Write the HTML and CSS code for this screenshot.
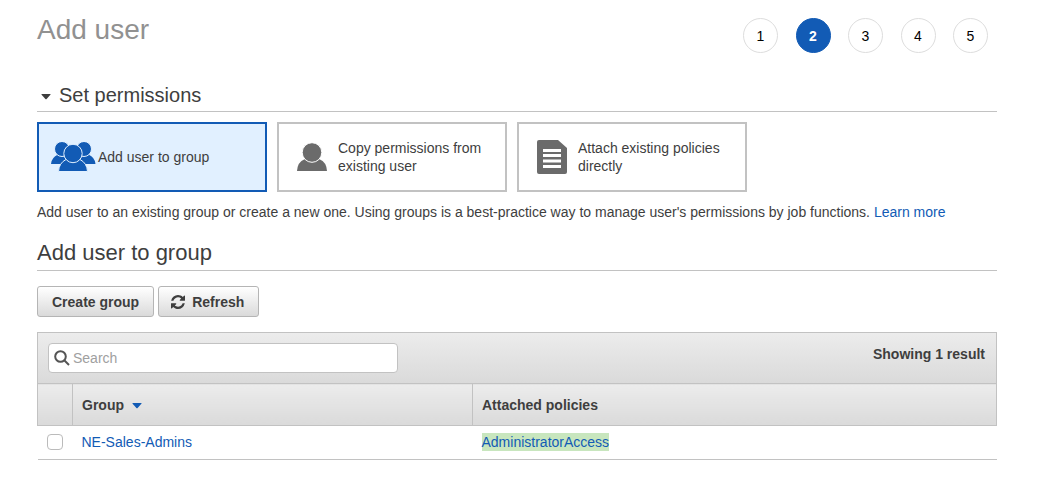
FILE: index.html
```html
<!DOCTYPE html>
<html lang="en">
<head>
<meta charset="utf-8">
<meta name="viewport" content="width=device-width, initial-scale=1">
<title>Add user</title>
<link rel="stylesheet" href="styles.css">
</head>
<body>
<main class="page">
  <header class="page-header">
    <h1 class="page-title">Add user</h1>
    <ol class="steps">
      <li class="step">1</li>
      <li class="step step-current" aria-current="step">2</li>
      <li class="step">3</li>
      <li class="step">4</li>
      <li class="step">5</li>
    </ol>
  </header>

  <h2 class="section-title">
    <button class="section-toggle" type="button" aria-expanded="true">
      <svg class="caret" viewBox="0 0 10 6" aria-hidden="true"><path d="M1 0h8q1 0 .4.8L5.6 5q-.6.6-1.2 0L.6.8Q0 0 1 0z"/></svg>
      Set permissions
    </button>
  </h2>

  <div class="options">
    <button class="option option-selected" type="button" aria-pressed="true">
      <span class="option-icon">
        <svg width="45" height="30" viewBox="0 0 45 30" aria-hidden="true">
          <path d="M0 22Q.5 15.500 7 12.500Q11 16 17 13V22z"/>
          <path d="M44.500 22Q44 15.500 37.500 12.500Q33 16 27 13V22z"/>
          <g class="icon-front">
            <circle cx="11" cy="7" r="7.500"/>
            <circle cx="33" cy="7" r="7.500"/>
            <path d="M7.500 29.500Q8 21 15 17.500H29Q36 21 36.500 29.500z"/>
            <circle cx="22" cy="11.500" r="9.200"/>
          </g>
        </svg>
      </span>
      <span class="option-label">Add user to group</span>
    </button>
    <button class="option" type="button" aria-pressed="false">
      <span class="option-icon">
        <svg width="30" height="30" viewBox="0 0 30 30" aria-hidden="true">
          <path d="M0 29Q.5 20 7.500 17.200H22.500Q29.500 20 30 29z"/>
          <circle class="icon-head" cx="15" cy="10.500" r="9.800"/>
        </svg>
      </span>
      <span class="option-label">Copy permissions from existing user</span>
    </button>
    <button class="option" type="button" aria-pressed="false">
      <span class="option-icon">
        <svg width="30" height="34" viewBox="0 0 30 34" aria-hidden="true">
          <path d="M2 0H21L30 8V32Q30 34 28 34H2Q0 34 0 32V2Q0 0 2 0z"/>
          <path class="icon-lines" d="M6 10.500H24M6 15.500H24M6 21H24M6 26.500H24"/>
        </svg>
      </span>
      <span class="option-label">Attach existing policies directly</span>
    </button>
  </div>

  <p class="description">Add user to an existing group or create a new one. Using groups is a best-practice way to manage user's permissions by job functions. <a class="link" href="#">Learn more</a></p>

  <h2 class="section-title group-title">Add user to group</h2>

  <div class="actions">
    <button class="button" type="button">Create group</button>
    <button class="button button-refresh" type="button">
      <svg width="14" height="14" viewBox="0 0 1536 1536" aria-hidden="true"><path d="M1511 928q0 5-1 7-64 268-268 434.500T764 1536q-146 0-282.500-55T238 1324l-129 129q-19 19-45 19t-45-19-19-45V960q0-26 19-45t45-19h448q26 0 45 19t19 45-19 45l-137 137q71 66 161 102t187 36q134 0 250-65t186-179q11-17 53-117 8-23 30-23h192q13 0 22.500 9.500t9.500 22.500zm25-800v448q0 26-19 45t-45 19h-448q-26 0-45-19t-19-45 19-45l138-138Q969 256 768 256q-134 0-250 65T332 500q-11 17-53 117-8 23-30 23H50q-13 0-22.500-9.500T18 608v-7q65-268 270-434.500T768 0q146 0 284 55.500T1297 212l130-129q19-19 45-19t45 19 19 45z"/></svg>
      Refresh
    </button>
  </div>

  <section class="panel" aria-label="Groups">
    <div class="toolbar">
      <label class="search">
        <svg width="16" height="16" viewBox="0 0 16 16" aria-hidden="true"><circle cx="6.500" cy="6.500" r="5.300"/><path d="M10.500 10.500L15 15"/></svg>
        <input class="search-input" type="search" placeholder="Search" aria-label="Search groups">
      </label>
      <span class="result-count">Showing 1 result</span>
    </div>
    <table class="groups">
      <thead>
        <tr>
          <th class="col-check" aria-label="Select"></th>
          <th class="col-group" scope="col" aria-sort="descending">
            <span class="sort">Group <svg class="caret caret-sort" viewBox="0 0 10 6" aria-hidden="true"><path d="M1 0h8q1 0 .4.8L5.600 5q-.6.6-1.200 0L.6.8Q0 0 1 0z"/></svg></span>
          </th>
          <th scope="col">Attached policies</th>
        </tr>
      </thead>
      <tbody>
        <tr>
          <td class="col-check"><input class="checkbox" type="checkbox" aria-label="Select NE-Sales-Admins"></td>
          <td><a class="link" href="#">NE-Sales-Admins</a></td>
          <td><a class="link highlight" href="#">AdministratorAccess</a></td>
        </tr>
      </tbody>
    </table>
  </section>
</main>
</body>
</html>
```

FILE: styles.css
```css
* {
  box-sizing: border-box;
}

body {
  margin: 0;
  background: #fff;
  color: #3e3e3e;
  font-family: "Liberation Sans", Arial, sans-serif;
  font-size: 14px;
  line-height: 18px;
}

button,
input {
  color: inherit;
  font: inherit;
}

.page {
  padding: 14px 61px 24px 37px;
}

.page-header {
  display: flex;
  justify-content: space-between;
  align-items: flex-start;
  padding-right: 9px;
}

.page-title {
  margin: 0;
  color: #919191;
  font-size: 28px;
  font-weight: 400;
  line-height: 32px;
}

.steps {
  display: flex;
  justify-content: space-between;
  width: 245px;
  margin: 4px 0 0;
  padding: 0;
  list-style: none;
}

.step {
  display: flex;
  align-items: center;
  justify-content: center;
  width: 35px;
  height: 35px;
  border: 1px solid #ddd;
  border-radius: 50%;
  color: #000;
}

.step-current {
  border-color: #125bb5;
  background: #125bb5;
  color: #fff;
  font-weight: 700;
}

.section-title {
  margin: 28px 0 0;
  padding-bottom: 2px;
  border-bottom: 1px solid #c2c2c2;
  font-size: 20px;
  font-weight: 400;
  line-height: 28px;
}

.section-toggle {
  display: flex;
  align-items: center;
  gap: 8px;
  padding: 0 0 0 4px;
  border: 0;
  background: none;
}

.caret {
  width: 10px;
  height: 6px;
  margin-top: 4px;
  fill: #3e3e3e;
}

.options {
  display: flex;
  gap: 10px;
  margin-top: 10px;
}

.option {
  display: flex;
  align-items: center;
  width: 230px;
  min-height: 70px;
  padding: 0 12px 0 10px;
  border: 2px solid #c2c2c2;
  background: #fff;
  text-align: left;
  fill: #6b6b6b;
}

.option-selected {
  border-color: #125bb5;
  background: #e1f0ff;
  fill: #125bb5;
}

.option-icon {
  display: flex;
  flex: none;
  justify-content: center;
  width: 45px;
  margin-right: 4px;
}

.option-selected .option-icon {
  width: 49px;
  margin-right: 0;
}

.icon-front {
  stroke: #e1f0ff;
  stroke-width: 1;
}

.icon-head {
  stroke: #fff;
  stroke-width: 1;
}

.icon-lines {
  fill: none;
  stroke: #fff;
  stroke-width: 3;
}

.description {
  margin: 11px 0 0;
}

.link {
  color: #125bb5;
  text-decoration: none;
}

.group-title {
  margin-top: 18px;
  font-size: 22px;
  padding-bottom: 3px;
}

.actions {
  display: flex;
  gap: 4px;
  margin: 15px 0;
}

.button {
  display: flex;
  align-items: center;
  gap: 7px;
  height: 31px;
  padding: 0 14px;
  border: 1px solid #b5b5b5;
  border-radius: 3px;
  background: linear-gradient(#fff, #dadada);
  font-weight: 700;
}

.button-refresh {
  padding: 0 14px 0 12px;
}

.button svg {
  fill: #3e3e3e;
}

.toolbar {
  display: flex;
  justify-content: space-between;
  padding: 10px;
  border: 1px solid #c2c2c2;
  border-bottom: 0;
  background: linear-gradient(#ececec, #dadada);
}

.search {
  display: flex;
  align-items: center;
  gap: 3px;
  width: 350px;
  height: 30px;
  padding: 0 5px;
  border: 1px solid #c2c2c2;
  border-radius: 4px;
  background: #fff;
}

.search svg {
  flex: none;
  fill: none;
  stroke: #545454;
  stroke-width: 2;
}

.search-input {
  flex: 1;
  min-width: 0;
  padding: 0;
  border: 0;
  outline: 0;
  background: none;
}

.search-input::placeholder {
  color: #a0a0a0;
}

.result-count {
  padding: 2px 1px;
  font-weight: 700;
}

.groups {
  width: 100%;
  border-collapse: collapse;
  table-layout: fixed;
}

.groups th {
  height: 42px;
  padding: 0 9px;
  border: 1px solid #c2c2c2;
  background: linear-gradient(#ececec, #dadada);
  text-align: left;
}

.groups td {
  height: 34px;
  padding: 0 9px 2px;
  border-bottom: 1px solid #c2c2c2;
}

.groups .col-check {
  width: 35px;
}

.groups .col-group {
  width: 400px;
}

.sort {
  display: flex;
  align-items: center;
  gap: 8px;
}

.caret-sort {
  margin-top: 2px;
  fill: #125bb5;
}

.checkbox {
  display: block;
  width: 16px;
  height: 16px;
  margin: 0;
  appearance: none;
  border: 1px solid #bbb;
  border-radius: 4px;
  background: #fff;
}

.checkbox:checked {
  background: #125bb5;
}

.highlight {
  display: inline-block;
  background: #c8e6be;
}
```
